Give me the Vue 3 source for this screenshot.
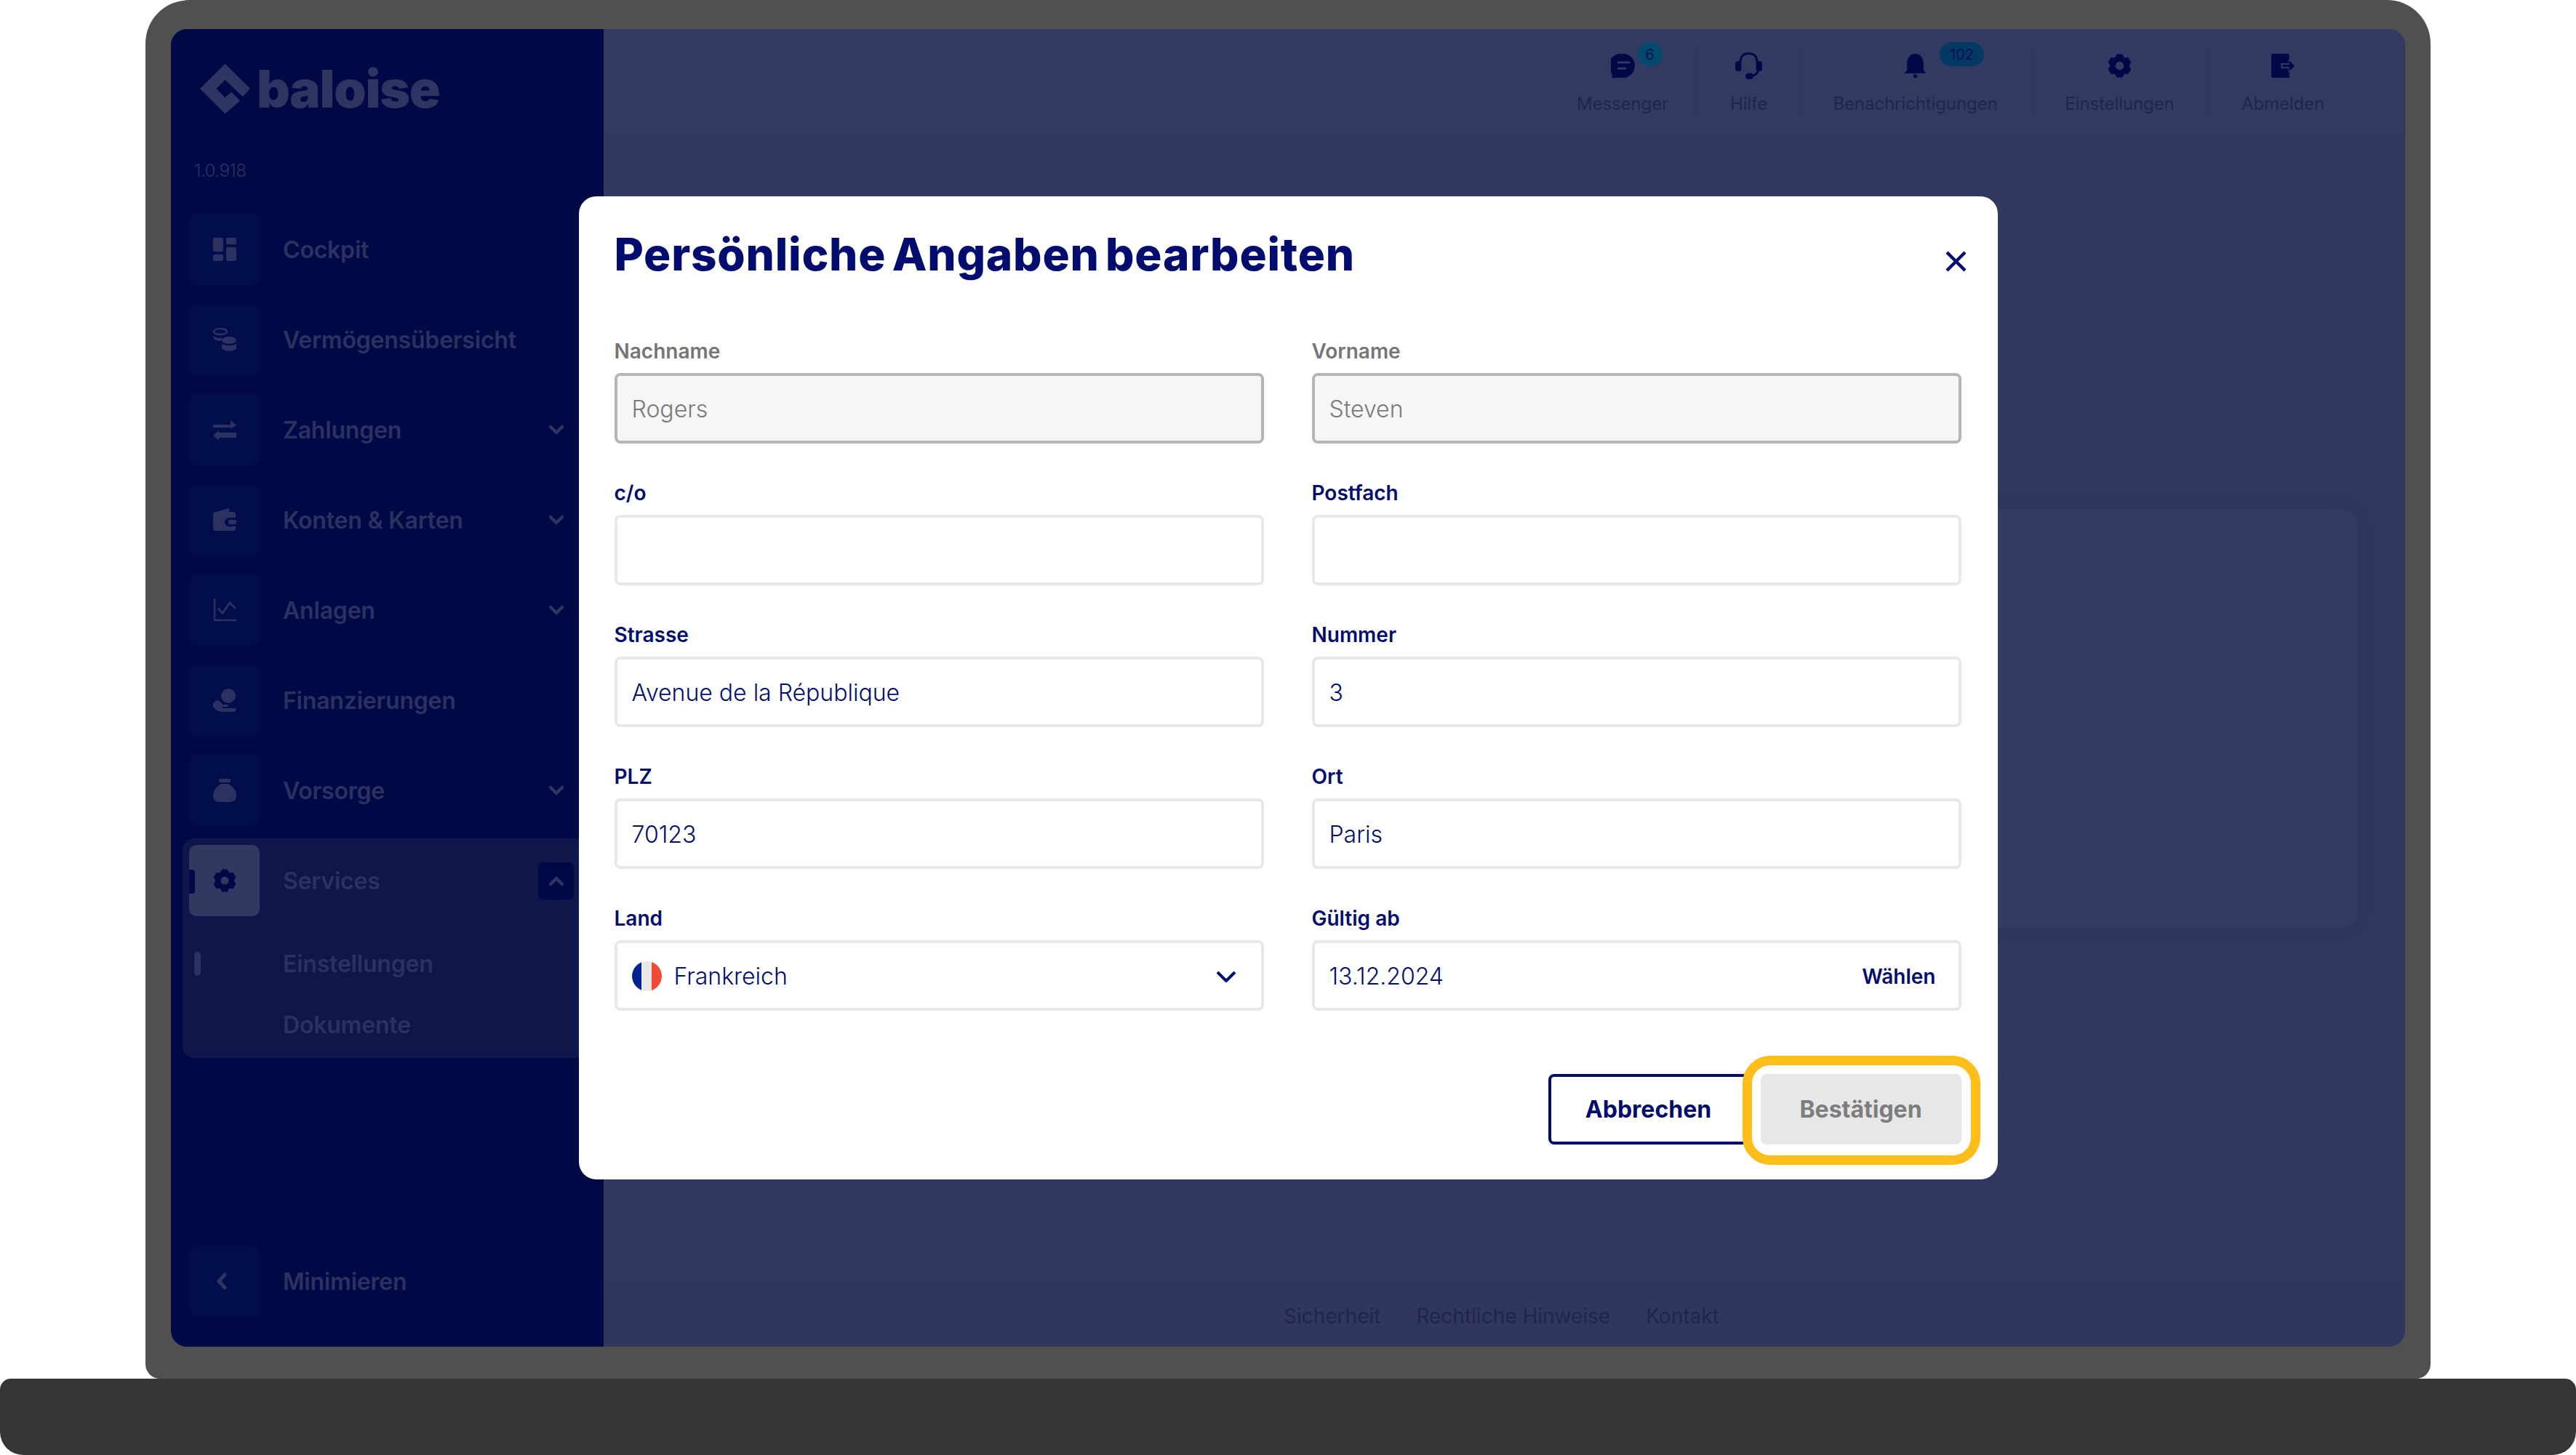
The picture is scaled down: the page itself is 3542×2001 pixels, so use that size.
<template>
  <div class="page">
    <div class="lid">
      <div class="screen">
        <aside class="sidebar">
          <div class="logo">
            <svg class="logo-mark" viewBox="26 26 208 208">
              <path d="M130 30L230 128L203 157L130 88L90 128L130 170L155 146L188 178L130 228L30 128Z" />
            </svg>
            <span class="logo-text">baloise</span>
          </div>
          <div class="version">1.0.918</div>
          <nav class="nav">
            <div v-for="item in navItems" :key="item.label" class="nav-item">
              <div class="tile">
                <svg class="nav-icon" viewBox="0 0 32 32" v-html="item.icon"></svg>
              </div>
              <span class="nav-label">{{ item.label }}</span>
              <svg v-if="item.chevron" class="chevron" viewBox="0 0 20 14">
                <path d="M2 3l8 8 8-8" />
              </svg>
            </div>
            <div class="nav-group">
              <div class="nav-item">
                <div class="tile tile-active">
                  <span class="tile-marker"></span>
                  <svg class="nav-icon nav-icon-dark" viewBox="0 0 32 32" v-html="gear"></svg>
                </div>
                <span class="nav-label">Services</span>
                <div class="chevron-box">
                  <svg class="chevron" viewBox="0 0 20 14"><path d="M2 11l8-8 8 8" /></svg>
                </div>
              </div>
              <div class="sub-item sub-first">
                <span class="sub-marker"></span>
                <span class="nav-label">Einstellungen</span>
              </div>
              <div class="sub-item">
                <span class="nav-label">Dokumente</span>
              </div>
            </div>
          </nav>
          <div class="nav-item minimize">
            <div class="tile">
              <svg class="min-icon" viewBox="0 0 14 24"><path d="M11 3L3 12l8 9" /></svg>
            </div>
            <span class="nav-label">Minimieren</span>
          </div>
        </aside>

        <main class="main">
          <header class="topbar">
            <div v-for="t in topItems" :key="t.label" class="top-item" :class="t.cls">
              <div class="top-icon-wrap">
                <svg class="top-icon" :viewBox="t.box || '0 0 32 32'" v-html="t.icon"></svg>
                <span v-if="t.badge" class="badge" :class="t.badgeCls">{{ t.badge }}</span>
              </div>
              <span class="top-label">{{ t.label }}</span>
            </div>
          </header>
          <div class="subheader"></div>
          <div class="content">
            <div class="card"></div>
          </div>
          <footer class="footer">
            <span>Sicherheit</span>
            <span>Rechtliche Hinweise</span>
            <span>Kontakt</span>
          </footer>
        </main>

        <div class="overlay">
          <section class="modal">
            <div class="modal-head">
              <h1 class="title">Persönliche Angaben bearbeiten</h1>
              <svg class="close" viewBox="0 0 29 29"><path d="M2 2l25 25M27 2L2 27" /></svg>
            </div>
            <div class="form">
              <div v-for="f in fields" :key="f.label" class="field">
                <label class="label" :class="{ 'label-off': f.disabled }">{{ f.label }}</label>
                <div class="input" :class="{ 'input-off': f.disabled }">{{ f.value }}</div>
              </div>
              <div class="field">
                <label class="label">Land</label>
                <div class="input select">
                  <span class="flag"><i class="fr-b"></i><i class="fr-w"></i><i class="fr-r"></i></span>
                  <span class="select-value">Frankreich</span>
                  <svg class="select-arrow" viewBox="0 0 28 16"><path d="M2 2l12 12L26 2" /></svg>
                </div>
              </div>
              <div class="field">
                <label class="label">Gültig ab</label>
                <div class="input date">
                  <span>13.12.2024</span>
                  <span class="pick">Wählen</span>
                </div>
              </div>
            </div>
            <div class="actions">
              <button class="btn btn-outline">Abbrechen</button>
              <button class="btn btn-off">Bestätigen</button>
              <span class="highlight"></span>
            </div>
          </section>
        </div>
      </div>
    </div>
    <div class="base"></div>
  </div>
</template>

<script setup>
// six-lobed cog, same one in sidebar and topbar
const gearPath = () => {
  const pts = []
  for (let i = 0; i < 6; i++) {
    const a = -90 + i * 60
    for (const [off, r] of [[-30, 12.5], [-13, 16], [13, 16]]) {
      const rad = ((a + off) * Math.PI) / 180
      pts.push(`${(16 + r * Math.cos(rad)).toFixed(2)} ${(16 + r * Math.sin(rad)).toFixed(2)}`)
    }
  }
  return `M${pts.join('L')}Z M16 10.500a5.500 5.500 0 100 11 5.500 5.500 0 000-11z`
}
const gear = `<path fill-rule="evenodd" stroke-linejoin="round" d="${gearPath()}"/>`

const navItems = [
  {
    label: 'Cockpit',
    icon: '<rect x="0" y="0" width="14" height="19" rx="2"/><rect x="18" y="0" width="14" height="9" rx="2"/><rect x="18" y="13" width="14" height="19" rx="2"/><rect x="0" y="23" width="14" height="9" rx="2"/>',
  },
  {
    label: 'Vermögensübersicht',
    icon: '<ellipse cx="10" cy="5" rx="9" ry="4" fill="none" stroke="currentColor" stroke-width="2.500"/><path d="M0 11c4 3 10 3 13 3l-2 4c-4 0-8-1-10-3z"/><ellipse cx="22" cy="17" rx="10" ry="5"/><path d="M12 22c4 3 16 3 20 0v6c-3 5-17 5-20 0z"/>',
  },
  {
    label: 'Zahlungen',
    chevron: true,
    icon: '<path d="M0 9h24V3l8 7-8 5v-2H0zM32 20H8v-3l-8 7 8 7v-4h24z"/>',
  },
  {
    label: 'Konten & Karten',
    chevron: true,
    icon: '<path d="M4 5L22 0v5h6a3 3 0 013 3v5H22a6 6 0 000 12h9v3a3 3 0 01-3 3H4a4 4 0 01-4-4V9a4 4 0 014-4z"/><rect x="21" y="16" width="11" height="6" rx="2"/>',
  },
  {
    label: 'Anlagen',
    chevron: true,
    icon: '<path d="M2 0v30h30" fill="none" stroke="currentColor" stroke-width="2.500"/><path d="M7 20l6 6 10-14 8 8" fill="none" stroke="currentColor" stroke-width="3" transform="translate(0 -6)"/>',
  },
  {
    label: 'Finanzierungen',
    icon: '<circle cx="21" cy="10" r="10"/><path d="M0 20l5-4c3 0 6 2 8 6h8l-1 3h-9c2 2 3 2 6 2h15c0 3-2 5-4 5H12C6 32 2 27 0 25z"/>',
  },
  {
    label: 'Vorsorge',
    chevron: true,
    icon: '<rect x="8" y="0" width="16" height="5" rx="1"/><path d="M11 7h10c7 4 11 10 11 16 0 6-4 9-9 9H9c-5 0-9-3-9-9 0-6 4-12 11-16z"/>',
  },
]

const topItems = [
  {
    label: 'Messenger',
    cls: 'w-messenger',
    badge: '6',
    badgeCls: 'badge-small',
    icon: '<path d="M16 0a16 16 0 110 32H1c1-2 1-4 0-6a16 16 0 0115-26z"/><path d="M9.500 11.500h15M9.500 19.500h10" fill="none" stroke="#333a62" stroke-width="2.500" stroke-linecap="round"/>',
  },
  {
    label: 'Hilfe',
    cls: 'w-hilfe',
    box: '0 0 37 37',
    icon: '<rect x="0" y="12" width="8.500" height="14" rx="4"/><rect x="28.500" y="12" width="8.500" height="14" rx="4"/><path d="M7 14C7 5 12 1.500 18.500 1.500S30 5 30 14M31 25c0 4-4 7-9 7" fill="none" stroke="#000945" stroke-width="3"/><rect x="14" y="28.500" width="11" height="8.500" rx="4.200"/>',
  },
  {
    label: 'Benachrichtigungen',
    cls: 'w-benach',
    badge: '102',
    badgeCls: 'badge-big',
    icon: '<path d="M16 0c7 0 11 6 11 13v9l4 4H1l4-4v-9C5 6 9 0 16 0z"/><circle cx="16" cy="30" r="2.500"/>',
  },
  { label: 'Einstellungen', cls: 'w-einst', icon: gear },
  {
    label: 'Abmelden',
    cls: 'w-abm',
    icon: '<path d="M3 0h18a3 3 0 013 3v29H3a3 3 0 01-3-3V3a3 3 0 013-3z"/><path d="M14 13.500h10V9l7 7-7 7v-4.500H14z" stroke="#333a62" stroke-width="2"/><path d="M24 9l7 7-7 7z"/>',
  },
]

const fields = [
  { label: 'Nachname', value: 'Rogers', disabled: true },
  { label: 'Vorname', value: 'Steven', disabled: true },
  { label: 'c/o', value: '' },
  { label: 'Postfach', value: '' },
  { label: 'Strasse', value: 'Avenue de la République' },
  { label: 'Nummer', value: '3' },
  { label: 'PLZ', value: '70123' },
  { label: 'Ort', value: 'Paris' },
]
</script>

<style>
html,
body {
  margin: 0;
  background: #fff;
}
</style>

<style scoped>
.page {
  width: 3542px;
  height: 2001px;
  display: flex;
  flex-direction: column;
  align-items: center;
  overflow: hidden;
  font-family: Inter, "Liberation Sans", sans-serif;
  background: #fff;
}

.lid {
  width: 3142px;
  height: 1896px;
  box-sizing: border-box;
  padding: 40px 35px 44px;
  background: #505050;
  border-radius: 60px 60px 20px 20px;
}

.screen {
  position: relative;
  display: flex;
  height: 100%;
  border-radius: 22px;
  overflow: hidden;
  background: #31385f;
}

.base {
  width: 3542px;
  height: 105px;
  background: #363636;
  border-radius: 15px 15px 32px 32px;
}

/* sidebar */
.sidebar {
  width: 595px;
  flex: none;
  box-sizing: border-box;
  display: flex;
  flex-direction: column;
  padding: 49px 0 41px 25px;
  background: #000945;
  color: #2c3260;
}

.logo {
  display: flex;
  align-items: center;
  gap: 9px;
  height: 67px;
  padding-left: 15px;
}

.logo-mark {
  width: 69px;
  height: 69px;
  flex: none;
  fill: #2f3560;
  stroke: #2f3560;
  stroke-width: 6;
  stroke-linejoin: round;
}

.logo-text {
  font-size: 71px;
  line-height: 67px;
  font-weight: 900;
  letter-spacing: -1.200px;
  color: #2f3560;
}

.version {
  margin: 64px 0 44px 7px;
  font-size: 24px;
  line-height: 30px;
  font-weight: 300;
  letter-spacing: -0.500px;
}

.nav {
  display: flex;
  flex-direction: column;
  gap: 26px;
}

.nav-item {
  display: flex;
  align-items: center;
  height: 98px;
  position: relative;
}

.tile {
  position: relative;
  width: 97px;
  height: 98px;
  flex: none;
  display: flex;
  align-items: center;
  justify-content: center;
  border-radius: 10px;
  background: #020d4b;
}

.tile-active {
  background: #32385f;
}

.tile-marker {
  position: absolute;
  left: 0;
  top: 34px;
  width: 8px;
  height: 33px;
  border-radius: 0 4px 4px 0;
  background: #000945;
}

.nav-icon {
  width: 32px;
  height: 32px;
  fill: #2c3260;
  color: #2c3260;
}

.nav-icon-dark {
  fill: #000945;
}

.min-icon {
  width: 14px;
  height: 24px;
  margin-right: 8px;
  fill: none;
  stroke: #2f3560;
  stroke-width: 5;
  stroke-linecap: round;
  stroke-linejoin: round;
}

.nav-label {
  margin-left: 32px;
  padding-top: 2px;
  font-size: 32px;
  line-height: 40px;
  font-weight: 600;
  letter-spacing: -0.200px;
  color: #2c3260;
}

.chevron {
  width: 20px;
  height: 14px;
  fill: none;
  stroke: #2f3560;
  stroke-width: 4.500;
  stroke-linecap: round;
  stroke-linejoin: round;
}

.nav-item > .chevron {
  position: absolute;
  left: 495px;
  top: 42px;
}

.chevron-box {
  position: absolute;
  left: 480px;
  top: 24px;
  width: 49px;
  height: 51px;
  display: flex;
  align-items: center;
  justify-content: center;
  border-radius: 6px;
  background: #000945;
}

.nav-group {
  margin-left: -9px;
  padding: 9px 0 0 9px;
  height: 293px;
  border-radius: 16px 0 0 16px;
  background: #0e164a;
  margin-top: -9px;
}

.sub-item {
  position: relative;
  display: flex;
  align-items: center;
  height: 83px;
  padding-left: 97px;
}

.sub-first {
  margin-top: 23px;
  border-bottom: 1px solid #131b4e;
}

.sub-marker {
  position: absolute;
  left: 7px;
  top: 26px;
  width: 9px;
  height: 33px;
  border-radius: 5px;
  background: #2c3260;
}

.minimize {
  margin-top: auto;
}

/* main area */
.main {
  flex: 1;
  display: flex;
  flex-direction: column;
  min-width: 0;
}

.topbar {
  height: 145px;
  box-sizing: border-box;
  flex: none;
  display: flex;
  justify-content: flex-end;
  align-items: flex-start;
  padding: 23px 66px 0 0;
  background: #333a62;
}

.top-item {
  height: 100px;
  box-sizing: border-box;
  display: flex;
  flex-direction: column;
  align-items: center;
  border-right: 2px dotted #2f3560;
}

.top-item:last-child {
  border-right: 0;
}

.w-messenger {
  width: 208px;
}

.w-hilfe {
  width: 139px;
}

.w-benach {
  width: 319px;
}

.w-einst {
  width: 243px;
}

.w-abm {
  width: 204px;
}

.top-icon-wrap {
  position: relative;
  height: 33px;
  margin-top: 11px;
}

.top-icon {
  display: block;
  width: 33px;
  height: 33px;
  fill: #000945;
}

.w-hilfe .top-icon {
  width: 37px;
  height: 37px;
  margin-top: -2px;
}

.top-label {
  margin-top: 20px;
  font-size: 24px;
  line-height: 32px;
  font-weight: 400;
  letter-spacing: -0.100px;
  color: #1f2550;
  white-space: nowrap;
}

.badge {
  position: absolute;
  top: -16px;
  height: 33px;
  display: flex;
  align-items: center;
  justify-content: center;
  font-size: 20px;
  color: #000f55;
}

.badge-small {
  left: 37px;
  width: 34px;
  border-radius: 16px;
  background: #034a6e;
}

.badge-big {
  left: 50px;
  width: 61px;
  border-radius: 16px;
  background: #033a63;
}

.subheader {
  height: 347px;
  flex: none;
  background: #313961;
  border-bottom: 2px solid #2f365e;
  box-sizing: border-box;
}

.content {
  flex: 1;
  padding: 168px 65px 0 0;
  display: flex;
  justify-content: flex-end;
  background: #2f3860;
}

.card {
  width: 1400px;
  height: 576px;
  border-radius: 24px;
  background: #343a62;
  box-shadow: 0 0 24px rgba(20, 24, 80, 0.12);
}

.footer {
  height: 87px;
  flex: none;
  box-sizing: border-box;
  display: flex;
  gap: 49px;
  align-items: flex-start;
  padding: 26px 0 0 935px;
  border-top: 2px solid #2e345d;
  background: #31365f;
  font-size: 28px;
  line-height: 34px;
  color: #1f2550;
}

/* modal */
.overlay {
  position: absolute;
  inset: 0;
  display: flex;
  align-items: center;
  justify-content: center;
}

.modal {
  width: 1951px;
  height: 1352px;
  box-sizing: border-box;
  padding: 0 50px 0 49px;
  border-radius: 24px;
  background: #fff;
  color: #000d6e;
}

.modal-head {
  height: 197px;
  display: flex;
  justify-content: space-between;
}

.title {
  margin: 0;
  padding-top: 40px;
  font-size: 62px;
  line-height: 80px;
  font-weight: 800;
  letter-spacing: 0.800px;
  word-spacing: -6px;
}

.close {
  width: 29px;
  height: 29px;
  margin: 75px -7px 0 0;
  fill: none;
  stroke: #000d6e;
  stroke-width: 4.500;
}

.form {
  display: grid;
  grid-template-columns: 893px 893px;
  column-gap: 66px;
}

.field {
  height: 195px;
  display: flex;
  flex-direction: column;
}

.label {
  height: 46px;
  font-size: 28px;
  line-height: 33px;
  font-weight: 600;
}

.label-off {
  color: #757575;
}

.input {
  height: 97px;
  box-sizing: border-box;
  display: flex;
  align-items: center;
  padding: 2px 20px 0;
  border: 4px solid #e8e8e8;
  border-radius: 8px;
  font-size: 32px;
  font-weight: 300;
}

.input-off {
  border-color: #b6b6b6;
  background: #f6f6f6;
  color: #7a7a7a;
}

.flag {
  width: 41px;
  height: 41px;
  flex: none;
  display: flex;
  border-radius: 50%;
  overflow: hidden;
}

.flag i {
  flex: 1;
}

.fr-b {
  background: #002393;
}

.fr-w {
  background: #e8e8e8;
}

.fr-r {
  background: #f04b35;
}

.select-value {
  margin-left: 17px;
}

.select-arrow {
  width: 28px;
  height: 16px;
  margin: 0 14px 0 auto;
  fill: none;
  stroke: #000d6e;
  stroke-width: 4;
}

.date {
  justify-content: space-between;
}

.pick {
  margin-right: 11px;
  font-size: 28px;
  font-weight: 600;
}

.actions {
  position: relative;
  margin-top: 35px;
  display: flex;
  justify-content: flex-end;
  gap: 16px;
}

.btn {
  width: 276px;
  height: 97px;
  box-sizing: border-box;
  border-radius: 8px;
  font-family: inherit;
  font-size: 32px;
  font-weight: 700;
}

.btn-outline {
  border: 4px solid #000d6e;
  background: #fff;
  color: #000d6e;
}

.btn-off {
  border: 0;
  background: #e7e7e7;
  color: #7d7d7d;
}

.highlight {
  position: absolute;
  right: -26px;
  top: -25px;
  width: 327px;
  height: 150px;
  box-sizing: border-box;
  border: 13px solid #ffbd1a;
  border-radius: 38px;
}
</style>
